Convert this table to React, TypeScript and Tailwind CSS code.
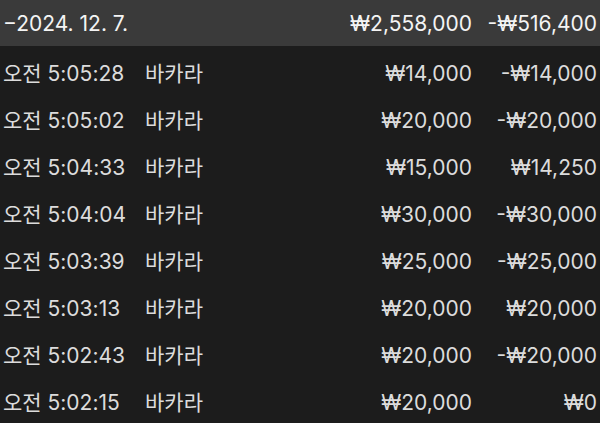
const rows = [
  { time: "오전 5:05:28", game: "바카라", bet: "₩14,000", result: "-₩14,000" },
  { time: "오전 5:05:02", game: "바카라", bet: "₩20,000", result: "-₩20,000" },
  { time: "오전 5:04:33", game: "바카라", bet: "₩15,000", result: "₩14,250" },
  { time: "오전 5:04:04", game: "바카라", bet: "₩30,000", result: "-₩30,000" },
  { time: "오전 5:03:39", game: "바카라", bet: "₩25,000", result: "-₩25,000" },
  { time: "오전 5:03:13", game: "바카라", bet: "₩20,000", result: "₩20,000" },
  { time: "오전 5:02:43", game: "바카라", bet: "₩20,000", result: "-₩20,000" },
  { time: "오전 5:02:15", game: "바카라", bet: "₩20,000", result: "₩0" },
];

const font = { fontFamily: "Inter, 'Noto Sans CJK KR', sans-serif" };

export default function App() {
  return (
    <div
      className="w-[600px] h-[423px] overflow-hidden bg-[#1c1c1c] text-[21px] leading-none"
      style={font}
    >
      <div className="flex items-center h-[46px] bg-[#3a3a3a] text-[#f4f4f4] pl-[3px] pr-[3px]">
        <span className="flex-1">−2024. 12. 7.</span>
        <span className="w-[200px] text-right">₩2,558,000</span>
        <span className="w-[125px] text-right">-₩516,400</span>
      </div>
      <div className="pt-1">
        {rows.map((r) => (
          <div
            key={r.time}
            className="flex items-center h-[47px] text-[#dcdcdc] pl-[3px] pr-[3px]"
          >
            <span className="w-[142px]">{r.time}</span>
            <span className="flex-1">{r.game}</span>
            <span className="w-[200px] text-right">{r.bet}</span>
            <span className="w-[125px] text-right">{r.result}</span>
          </div>
        ))}
      </div>
    </div>
  );
}
